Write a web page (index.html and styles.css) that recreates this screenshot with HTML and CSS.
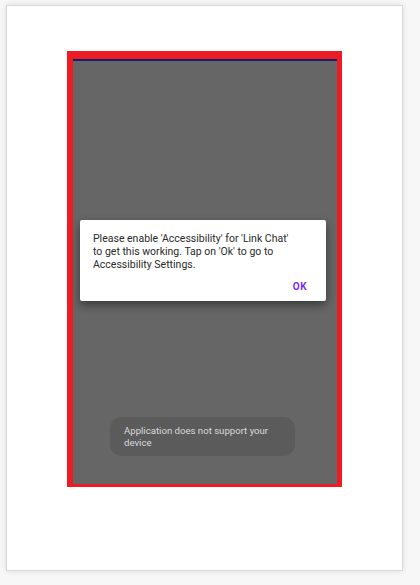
FILE: index.html
```html
<!DOCTYPE html>
<html>
<head>
<meta charset="utf-8">
<link rel="stylesheet" href="styles.css">
</head>
<body>
<div class="card">
  <div class="phone">
    <div class="statusline"></div>
    <div class="screen">
      <div class="dialog">
        <p class="message">Please enable 'Accessibility' for 'Link Chat' to get this working. Tap on 'Ok' to go to Accessibility Settings.</p>
        <div class="actions"><span class="ok">OK</span></div>
      </div>
      <div class="toast">Application does not support your device</div>
    </div>
  </div>
</div>
</body>
</html>
```
FILE: styles.css
```css
html, body {
  margin: 0;
  padding: 0;
  background: #f7f7f7;
  width: 420px;
  height: 585px;
  overflow: hidden;
  font-family: Roboto, "Noto Sans", sans-serif;
}
.card {
  box-sizing: border-box;
  margin: 5px 0 0 6px;
  width: 397px;
  height: 566px;
  background: #ffffff;
  border: 1px solid #d8d8d8;
  box-shadow: 0 0 6px rgba(0,0,0,0.12);
  padding: 45px 0 0 60px;
}
.phone {
  box-sizing: border-box;
  width: 275px;
  height: 436px;
  border-style: solid;
  border-color: #ed1c24;
  border-width: 8px 5px 3px 6px;
  display: flex;
  flex-direction: column;
  background: #666666;
}
.statusline {
  height: 2px;
  background: #1b1b6b;
}
.screen {
  flex: 1;
  display: flex;
  flex-direction: column;
  padding: 159px 0 0 7px;
}
.dialog {
  box-sizing: border-box;
  width: 246px;
  height: 81px;
  background: #ffffff;
  border-radius: 2px;
  box-shadow: 0 4px 10px rgba(0,0,0,0.45);
  padding: 12px 26px 0 13px;
  display: flex;
  flex-direction: column;
}
.message {
  margin: 0;
  font-size: 10.5px;
  line-height: 13px;
  color: #2a2a2a;
}
.actions {
  display: flex;
  justify-content: flex-end;
  padding: 10px 0 0 0;
  margin-right: -7px;
}
.ok {
  font-size: 10px;
  font-weight: 700;
  color: #7b2cf0;
  letter-spacing: 0.5px;
}
.toast {
  box-sizing: border-box;
  margin: 116px 0 0 30px;
  width: 185px;
  height: 39px;
  border-radius: 12px;
  background: #5b5b5b;
  color: #dadada;
  font-size: 9.6px;
  line-height: 12px;
  padding: 8px 20px 0 14px;
}
```
